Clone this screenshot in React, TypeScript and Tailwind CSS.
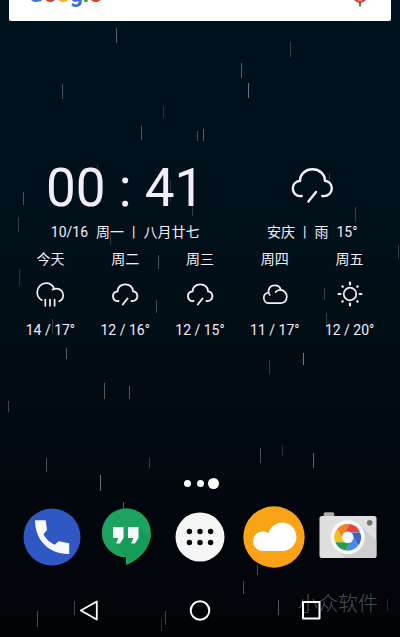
import type { ReactNode } from 'react';

type IconName = 'rain' | 'storm' | 'cloudy' | 'sunny';

const forecast: { day: string; icon: IconName; label: string; temp: string }[] = [
  { day: '今天', icon: 'rain', label: '雨', temp: '14 / 17°' },
  { day: '周二', icon: 'storm', label: '阵雨', temp: '12 / 16°' },
  { day: '周三', icon: 'storm', label: '阵雨', temp: '12 / 15°' },
  { day: '周四', icon: 'cloudy', label: '多云', temp: '11 / 17°' },
  { day: '周五', icon: 'sunny', label: '晴', temp: '12 / 20°' },
];

// x, y, length, opacity
const drops = [
  [116, 28, 15, 0.4], [290, 42, 15, 0.25], [241, 63, 15, 0.4], [248, 83, 15, 0.5],
  [62, 84, 15, 0.35], [163, 106, 12, 0.2], [141, 126, 14, 0.35], [197, 131, 10, 0.3],
  [203, 129, 12, 0.4], [23, 192, 13, 0.35], [18, 217, 15, 0.25], [97, 164, 12, 0.15],
  [170, 180, 22, 0.2], [192, 207, 9, 0.25], [355, 207, 15, 0.25], [329, 174, 8, 0.25],
  [110, 233, 12, 0.2], [19, 270, 16, 0.2], [158, 255, 14, 0.35], [156, 300, 13, 0.3],
  [52, 319, 15, 0.25], [324, 288, 12, 0.25], [326, 313, 12, 0.25], [398, 245, 14, 0.25],
  [66, 348, 11, 0.4], [303, 353, 12, 0.55], [269, 360, 14, 0.25], [104, 383, 16, 0.4],
  [129, 386, 13, 0.4], [8, 401, 11, 0.3], [46, 458, 14, 0.35], [149, 458, 10, 0.25],
  [100, 475, 16, 0.5], [260, 448, 15, 0.35], [282, 445, 11, 0.2], [313, 453, 15, 0.45],
  [123, 502, 8, 0.4], [257, 565, 10, 0.35], [243, 581, 13, 0.35], [74, 601, 14, 0.3],
  [37, 611, 16, 0.35], [165, 611, 14, 0.3], [161, 619, 12, 0.2], [278, 600, 15, 0.4],
  [387, 599, 12, 0.15],
];

const lensColors = ['#f5bf1a', '#f08222', '#e2483d', '#3a62c9', '#4a8af0', '#2a9a4c'];

function Rain() {
  return (
    <svg className="pointer-events-none absolute inset-0 h-full w-full" aria-hidden="true">
      {drops.map(([x, y, length, opacity]) => (
        <rect key={`${x}-${y}`} x={x} y={y} width="1" height={length} fill="#cfd8e0" opacity={opacity} />
      ))}
    </svg>
  );
}

function StormIcon({ className, strokeWidth, label }: { className: string; strokeWidth: number; label: string }) {
  return (
    <svg
      viewBox="0 0 48 48"
      className={className}
      fill="none"
      stroke="currentColor"
      strokeWidth={strokeWidth}
      strokeLinecap="round"
      role="img"
      aria-label={label}
    >
      <path d="M13.7 32C8 33 4.8 28.6 4.8 24.4c0-4 3-7.2 7.2-7.7C12.2 10 17.5 5.3 24.5 5.3S36.8 10 37 16.7c4 .5 6.8 3.7 6.8 7.7 0 4.2-3.8 8.6-9.5 7.6" />
      <path d="M28 28l-7.6 9.6" />
    </svg>
  );
}

function WeatherIcon({ name, label }: { name: IconName; label: string }) {
  if (name === 'storm') {
    return <StormIcon className="size-[30px]" strokeWidth={3} label={label} />;
  }

  return (
    <svg
      viewBox="0 0 30 30"
      className="size-[30px]"
      fill="none"
      stroke="currentColor"
      strokeWidth="1.7"
      strokeLinecap="round"
      role="img"
      aria-label={label}
    >
      {name === 'rain' && (
        <>
          <path d="M6.8 19.2C4 17.6 2.2 14.6 2.2 11.2C2.2 6.2 6.2 2.2 11.2 2.2C14.800 2.200 17.700 4.200 19.200 7.600" />
          <path d="M17.600 8.600C19 7.900 20.200 7.700 21.600 7.700C25.400 7.700 28.200 10.600 28.200 14.200C28.200 17.200 26.600 19.200 24.200 20.200" />
          <path d="M10.3 18.5V24.8M15 18.5V24.8M19.6 18.5V24.8" />
        </>
      )}
      {name === 'cloudy' && (
        <>
          <path d="M9.8 14C8.3 12.5 8.3 11 8.5 9.8C9 6.3 11.5 4.3 14.7 4.3C17.7 4.3 20.2 6 20.9 8.8" />
          <path d="M8.5 11.5C5.5 12 3.8 14.3 3.8 16.8C3.8 19.8 6 22.2 9 22.2H20.5C24.2 22.2 26.8 19.3 26.8 15.7C26.8 11.8 23.8 8.8 20.2 8.8C18.3 8.8 16.7 9.5 15.5 11" />
        </>
      )}
      {name === 'sunny' && (
        <>
          <circle cx="15" cy="13" r="6.3" />
          {[0, 45, 90, 135, 180, 225, 270, 315].map((angle) => (
            <path
              key={angle}
              d={angle % 90 === 0 ? 'M15 3.4V1.6' : 'M15 2.8V2.2'}
              strokeWidth="2.2"
              transform={`rotate(${angle} 15 13)`}
            />
          ))}
        </>
      )}
    </svg>
  );
}

function DockButton({ label, children }: { label: string; children: ReactNode }) {
  return (
    <button type="button" aria-label={label} className="flex justify-center">
      <svg viewBox="0 0 64 64" className="size-16">
        {children}
      </svg>
    </button>
  );
}

function Dock() {
  return (
    <div className="grid grid-cols-5 px-[15px]">
      <DockButton label="电话">
        <circle cx="32" cy="32" r="28.5" fill="#3058c4" />
        <path
          d="M15 15.3H25.7L27 25L23.4 29.3C26 34 29.5 37.5 34.5 39.8L38.8 36.3L49.2 38.3V49C29 49.5 15 35 15 15.3z"
          fill="#f7f9fc"
        />
      </DockButton>

      <DockButton label="环聊">
        <circle cx="32.3" cy="27.8" r="24.5" fill="#1ba35f" />
        <path d="M32 50V60C47 54 56.8 42 56.8 28L40 28z" fill="#1ba35f" />
        <path d="M44.5 22L56 33C53 44 46 52 36 58.2L22 38.5z" fill="#128a4c" opacity="0.3" />
        <path
          d="M19 22h10.5v11l-3.5 5.5h-4l2.5-5.5H19zM34 22h10.5v11l-3.5 5.5h-4l2.5-5.5H34z"
          fill="#f5faf6"
        />
      </DockButton>

      <DockButton label="所有应用">
        <circle cx="32" cy="32" r="24.5" fill="#f5f5f5" />
        {[21.4, 32, 42.6].map((x) => (
          <g key={x} fill="#050505">
            <circle cx={x} cy="26.5" r="2.7" />
            <circle cx={x} cy="37.5" r="2.7" />
          </g>
        ))}
      </DockButton>

      <DockButton label="天气">
        <circle cx="32" cy="32" r="30.7" fill="#fba316" />
        <path d="M21 46A9.8 9.8 0 1 1 26.5 28.2A14.2 14.2 0 1 1 39.8 46z" fill="#fff" />
      </DockButton>

      <DockButton label="相机">
        <rect x="7.7" y="7.3" width="10.5" height="8" rx="1.5" fill="#a9abad" />
        <rect x="3.5" y="11" width="57" height="42" rx="2.5" fill="#dfdfe0" />
        <path d="M44 20L60.5 36V50.5a2.5 2.5 0 0 1-2.5 2.5H29L20 44z" fill="#c8c8ca" opacity="0.7" />
        <circle cx="53.7" cy="17.7" r="2.8" fill="#707274" />
        <circle cx="31.7" cy="32.3" r="17" fill="#f8f8f8" />
        <g transform="translate(31.7 32.3)">
          {lensColors.map((color, i) => (
            <path
              key={color}
              d="M-12.4 4.9L0 4.9L-4.24 2.45L-10.5 -8.2A13.3 13.3 0 0 0 -12.4 4.9z"
              fill={color}
              transform={`rotate(${i * 60})`}
            />
          ))}
          <circle r="5.8" fill="#f8f8f8" />
        </g>
      </DockButton>
    </div>
  );
}

function NavBar() {
  return (
    <nav className="relative grid h-[53px] grid-cols-3 items-center px-[34px]" aria-label="系统导航">
      <button type="button" aria-label="返回" className="flex justify-center">
        <svg viewBox="0 0 24 24" className="size-6" fill="none" stroke="#fff" strokeWidth="1.8" strokeLinejoin="round">
          <path d="M3.8 11.5L19.8 2.5V20.5z" />
        </svg>
      </button>
      <button type="button" aria-label="主屏幕" className="flex justify-center">
        <svg viewBox="0 0 24 24" className="size-6" fill="none" stroke="#fff" strokeWidth="2">
          <circle cx="12" cy="11.5" r="9.3" />
        </svg>
      </button>
      <button type="button" aria-label="最近任务" className="flex justify-center">
        <svg viewBox="0 0 24 24" className="size-6" fill="none" stroke="#fff" strokeWidth="2" strokeLinejoin="round">
          <rect x="4" y="3" width="16.5" height="16.5" />
        </svg>
      </button>
      <span className="pointer-events-none absolute right-[22px] top-2 text-xl leading-6 font-light text-white/30">
        小众软件
      </span>
    </nav>
  );
}

function SearchBar() {
  return (
    <header className="overflow-hidden px-[9px]">
      <div className="-mt-9 flex h-[57px] items-center justify-between rounded-xs bg-white pr-[17px] pl-[19px]">
        <span className="pt-1 text-[23px] leading-6 font-bold">
          <span className="text-[#4176e8]">G</span>
          <span className="text-[#dc3d32]">o</span>
          <span className="text-[#f2b50f]">o</span>
          <span className="text-[#3e72d8]">g</span>
          <span className="text-[#2c9d4d]">l</span>
          <span className="text-[#dc3d32]">e</span>
        </span>
        <button type="button" aria-label="语音搜索">
          <svg viewBox="0 0 24 24" className="size-7" fill="none" strokeWidth="2">
            <rect x="9" y="2" width="6" height="12" rx="3" fill="#4285f4" />
            <path d="M12 19.500V23.500" stroke="#2c9d4d" />
            <path d="M6.500 13.500a5.500 6 0 0 0 11 0" stroke="#dc3d32" />
          </svg>
        </button>
      </div>
    </header>
  );
}

export default function App() {
  return (
    <div className="relative flex min-h-screen flex-col overflow-hidden bg-linear-to-b from-[#00121f] via-[#010e16] to-[#010407] font-[Roboto,'Noto_Sans_CJK_SC',sans-serif] text-[#f3effa]">
      <Rain />
      <SearchBar />

      <main className="relative mt-[139px] px-[13px] text-sm leading-5">
        {/* Clock and current weather */}
        <div className="grid grid-cols-5">
          <section className="col-span-3 flex flex-col items-center gap-1.5">
            <time className="text-[53px] leading-14 whitespace-nowrap">00 : 41</time>
            <p className="flex gap-2">
              <span>10/16</span>
              <span>周一</span>
              <span>|</span>
              <span>八月廿七</span>
            </p>
          </section>
          <section className="col-span-2 flex flex-col items-center gap-1.5">
            <div className="flex h-14 items-center">
              <StormIcon className="size-12" strokeWidth={2.4} label="雨" />
            </div>
            <p className="flex gap-2">
              <span>安庆</span>
              <span>|</span>
              <span>雨</span>
              <span>15°</span>
            </p>
          </section>
        </div>

        {/* Five day forecast */}
        <ul className="mt-[7px] grid grid-cols-5">
          {forecast.map((item) => (
            <li key={item.day} className="flex flex-col items-center">
              <span>{item.day}</span>
              <span className="mt-3 mb-[9px]">
                <WeatherIcon name={item.icon} label={item.label} />
              </span>
              <span className="whitespace-nowrap">{item.temp}</span>
            </li>
          ))}
        </ul>
      </main>

      <footer className="relative mt-auto pt-6">
        {/* Page dots */}
        <div className="mb-4 flex items-center justify-center">
          <span className="mx-[3px] size-[7px] rounded-full bg-white" />
          <span className="mx-[3px] size-[7px] rounded-full bg-white" />
          <span className="mx-px size-[11px] rounded-full bg-white" />
        </div>
        <Dock />
        <div className="mt-[15px]">
          <NavBar />
        </div>
      </footer>
    </div>
  );
}
